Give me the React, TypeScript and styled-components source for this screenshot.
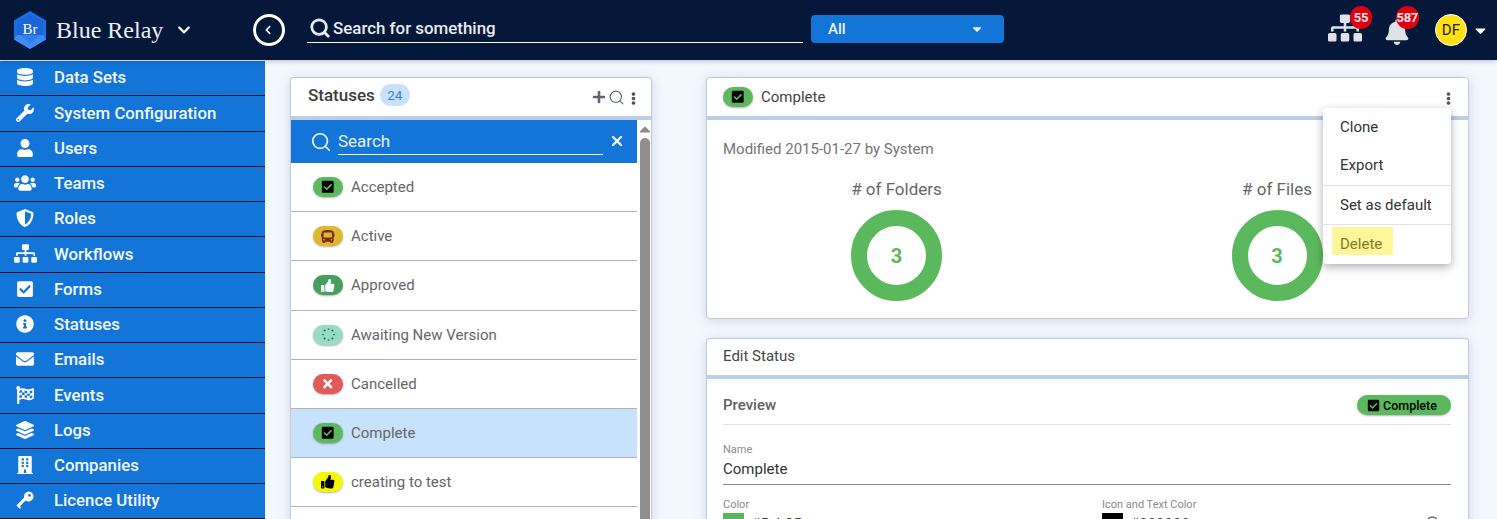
import React from "react";
import styled, { createGlobalStyle } from "styled-components";
import {
  FaDatabase, FaWrench, FaUser, FaUsers, FaShieldAlt, FaSitemap, FaCheckSquare, FaInfoCircle,
  FaEnvelope, FaFlagCheckered, FaLayerGroup, FaBuilding, FaBell, FaBus, FaThumbsUp,
  FaTimes, FaPlus, FaEllipsisV, FaChevronLeft, FaCaretDown, FaCaretUp, FaChevronDown,
} from "react-icons/fa";
import { Search, X } from "lucide-react";

const Global = createGlobalStyle`
  html, body { margin: 0; padding: 0; height: 519px; overflow: hidden; }
  body { font-family: Roboto, "Liberation Sans", sans-serif; background: #f3f7fe; }
  * { box-sizing: border-box; }
  svg { flex: none; }
`;

const Page = styled.div`
  width: 1497px; height: 519px; overflow: hidden; display: flex; flex-direction: column;
`;
const TopBar = styled.header`
  height: 60px; flex: none; background: #05183a; display: flex; align-items: center; color: #fff;
  position: relative; z-index: 2; box-shadow: 0 1px 5px rgba(5,24,58,.25);
`;
const Brand = styled.div`
  width: 253px; flex: none; display: flex; align-items: center; padding-left: 13px;
`;
const BrandName = styled.span`
  font-family: "Liberation Serif", serif; font-size: 24px; color: #eef0f3; margin-left: 9px; width: 121px;
`;
const BackButton = styled.button`
  width: 32px; height: 32px; border-radius: 50%; border: 3px solid #fff; background: none; color: #fff;
  display: flex; align-items: center; justify-content: center; padding: 0 2px 0 0; font-size: 10px; flex: none;
`;
const SearchField = styled.div`
  width: 496px; margin-left: 22px; height: 28px; border-bottom: 1px solid #fff;
  display: flex; align-items: center; gap: 2px; padding: 0 0 2px 2px; font-size: 16.9px; font-weight: 500; color: #e8ebf0;
  margin-bottom: 2px;
`;
const Scope = styled.div`
  width: 193px; height: 28px; margin-left: 8px; border-radius: 4px; background: #1375d8; color: #eef4fb; font-size: 15px;
  font-weight: 500; display: flex; align-items: center; justify-content: space-between; padding: 0 20px 0 17px; margin-bottom: 2px;
`;
const Tools = styled.div`
  margin-left: auto; display: flex; align-items: center; padding-right: 8px;
`;
const ToolIcon = styled.div<{ $ml: number; $w: number }>`
  position: relative; margin-left: ${(p) => p.$ml}px; width: ${(p) => p.$w}px; height: 30px; color: #dfe3e9;
  display: flex; align-items: flex-end; justify-content: center;
`;
const Badge = styled.span`
  position: absolute; top: -9px; right: -10px; min-width: 22px; height: 23px; padding: 0 1px; border-radius: 12px; background: #e0000f; color: #f0e6e6;
  font-size: 13px; font-weight: 700; display: flex; align-items: center; justify-content: center; letter-spacing: -.3px;
`;
const Avatar = styled.div`
  width: 32px; height: 32px; border-radius: 50%; background: #ffe014; border: 1px solid #fff; color: #222; margin-left: 26px;
  display: flex; align-items: center; justify-content: center; font-size: 15px; font-weight: 400; letter-spacing: .3px;
`;
const AvatarCaret = styled.span`
  margin-left: 5px; display: flex; color: #fff; font-size: 17px;
`;

const Body = styled.div`
  flex: 1; display: flex; min-height: 0; padding-top: 1px;
`;
const Sidebar = styled.nav`
  width: 265px; flex: none; background: #1375d8; display: flex; flex-direction: column;
`;
const NavItem = styled.div`
  height: 35.25px; flex: none; border-bottom: 1px solid #05152e; display: flex; align-items: center; color: #f4f8fd;
  font-size: 16.8px; font-weight: 500; padding-left: 16px; padding-bottom: 1.7px;
`;
const NavIcon = styled.span<{ $size: number }>`
  width: 18px; margin-right: 20px; flex: none; display: flex; justify-content: center; font-size: ${(p) => p.$size}px; color: #fff;
`;

const Content = styled.main`
  flex: 1; display: flex; align-items: flex-start; padding: 16px 28px 0 25px; gap: 54px; min-width: 0;
`;
const Card = styled.section`
  background: #fff; border: 1px solid #c6c9cf; border-radius: 4px; box-shadow: 0 2px 12px rgba(70,100,170,.22);
`;
const ListCard = styled(Card)`
  width: 362px; flex: none; height: 470px; overflow: hidden; display: flex; flex-direction: column; border-bottom: 0;
`;
const ListHead = styled.div`
  height: 38px; flex: none; border-bottom: 4px solid #b8cfe6; box-sizing: content-box; display: flex; align-items: center; padding: 0 11px 0 17px; color: #3a3a3a;
`;
const ListTitle = styled.span`
  font-size: 17px; font-weight: 500; color: #3d3d3d; margin-bottom: 4px;
`;
const Count = styled.span`
  margin: 0 0 4px 5px; width: 30px; height: 22px; border-radius: 11px; background: #c8e2fb; color: #3c7fd4; font-size: 13.5px;
  display: flex; align-items: center; justify-content: center;
`;
const HeadIcons = styled.div`
  margin-left: auto; display: flex; align-items: center; gap: 2px; color: #5c6670;
`;
const Kebab = styled(FaEllipsisV)`
  margin-top: 3px; color: #555;
`;
const ListBody = styled.div`
  flex: 1; display: flex; min-height: 0;
`;
const ListColumn = styled.div`
  width: 346px; flex: none; display: flex; flex-direction: column;
`;
const ListSearch = styled.div`
  height: 43px; flex: none; background: #1375d8; display: flex; align-items: center; padding: 0 12px 0 19px; color: #eef4fb;
`;
const ListSearchInput = styled.div`
  width: 265px; margin-left: 6px; height: 27px; border-bottom: 1px solid #fff; font-size: 17px; display: flex; align-items: center; color: #e9f1fb;
`;
const ListSearchClear = styled.span`
  margin-left: auto; display: flex; margin-bottom: 2px;
`;
const Row = styled.div<{ $active?: boolean }>`
  height: 49.2px; flex: none; display: flex; align-items: center; padding: 0 0 0 22px; border-bottom: 1px solid #b0b3b8; color: #666;
  font-size: 15px; background: ${(p) => (p.$active ? "#c8e2fb" : "#fff")};
`;
const Pill = styled.span<{ $bg: string; $fg: string }>`
  width: 30px; height: 20px; border-radius: 10px; background: ${(p) => p.$bg}; color: ${(p) => p.$fg}; display: flex; align-items: center; justify-content: center;
  box-shadow: 0 1px 2px rgba(0,0,0,.3); font-size: 13.5px; flex: none; margin-right: 8px;
`;
const ScrollTrack = styled.div`
  width: 16px; flex: none; padding: 0 3px; display: flex; flex-direction: column; align-items: center; color: #8e8e8e; background: #fff;
`;
const ScrollArrow = styled.span`
  height: 18px; flex: none; display: flex; align-items: center; justify-content: center; font-size: 18px;
`;
const ScrollThumb = styled.div`
  width: 10px; flex: 1; background: #8e8e8e; border-radius: 5px 5px 0 0;
`;

const RightColumn = styled.div`
  width: 763px; flex: none; display: flex; flex-direction: column; gap: 19px; position: relative;
`;
const StatsCard = styled(Card)`
  height: 242px; display: flex; flex-direction: column;
`;
const CardHead = styled.div`
  height: 38px; flex: none; box-sizing: content-box; border-bottom: 4px solid #b8cfe6; display: flex; align-items: center; padding: 0 13px 0 16px; font-size: 15px; color: #444;
`;
const EditHead = styled(CardHead)`
  height: 34px; padding-bottom: 2px;
`;
const Meta = styled.div`
  font-size: 15px; color: #757575; padding: 21px 16px 0; line-height: 17px;
`;
const Stats = styled.div`
  display: grid; grid-template-columns: 379px 382px; margin-top: 21px;
`;
const Stat = styled.div`
  display: flex; flex-direction: column; align-items: center; color: #666; font-size: 17px; line-height: 20px;
`;
const Donut = styled.div`
  width: 91px; height: 91px; margin-top: 11px; border-radius: 50%; border: 16px solid #5cb85c; color: #5cb85c; font-size: 20px; font-weight: 700;
  display: flex; align-items: center; justify-content: center;
`;
const Menu = styled.div`
  position: absolute; left: 617px; top: 31px; width: 128px; height: 156px; background: #fff; border-radius: 4px; box-shadow: 0 3px 10px rgba(0,0,0,.32); z-index: 3;
  display: flex; flex-direction: column; color: #333; font-size: 15px;
`;
const MenuItem = styled.div<{ $h: number; $line?: boolean }>`
  height: ${(p) => p.$h}px; display: flex; align-items: center; padding-left: 17px; flex: none;
  border-bottom: ${(p) => (p.$line ? "1px solid #e0e0e0" : "0")};
`;
const ExportItem = styled(MenuItem)`
  padding-bottom: 2px;
`;
const Highlight = styled.span`
  align-self: flex-start; margin: 2px 0 0 -8px; padding: 5px 11px 0 8px; height: 28px; display: flex; align-items: center; background: #fff59a; color: #817b27;
`;
const EditCard = styled(Card)`
  height: 200px; border-bottom: 0; overflow: hidden;
`;
const EditBody = styled.div`
  padding: 0 17px 0 16px;
`;
const PreviewRow = styled.div`
  height: 24px; box-sizing: content-box; display: flex; align-items: center; justify-content: space-between; border-bottom: 1px solid #e0e0e0; padding: 14px 0 7px;
  color: #616161; font-size: 15px; font-weight: 500;
`;
const PreviewBadge = styled.span`
  height: 20px; width: 94px; border-radius: 10px; background: #5cb85c; color: #000; display: flex; align-items: center; padding-left: 10px; gap: 3px; font-size: 12.5px; font-weight: 500; box-shadow: 0 1px 2px rgba(0,0,0,.3);
`;
const FieldLabel = styled.div`
  font-size: 11px; color: #8a8a8a; line-height: 12px;
`;
const NameField = styled.div`
  margin-top: 19px; height: 41px; border-bottom: 1px solid #888; display: flex; flex-direction: column;
`;
const FieldValue = styled.div`
  font-size: 15px; color: #333; margin-top: 5px; line-height: 17px;
`;
const ColorGrid = styled.div`
  display: grid; grid-template-columns: 379px 1fr; margin-top: 14px;
`;
const ColorValue = styled.div`
  display: flex; align-items: flex-start; gap: 7px; font-size: 15px; color: #444; margin-top: 2px; height: 14px;
`;
const ColorText = styled.span`
  padding-top: 3px; line-height: 17px;
`;
const Swatch = styled.span<{ $c: string }>`
  width: 21px; height: 14px; background: ${(p) => p.$c}; flex: none;
`;
const ColorEnd = styled.span`
  margin-left: auto; color: #6a6a6a; display: flex; margin-right: 10px; padding-top: 2px;
`;

const Logo = () => (
  <svg width="34" height="38" viewBox="0 0 34 38">
    <polygon points="17,0 33,9.5 33,28.5 17,38 1,28.5 1,9.5" fill="#1c70e6" />
    <polygon points="17,3 30,10.5 30,24 4,24 4,10.5" fill="#1a66d8" />
    <polygon points="4,24 30,24 33,28.5 17,38 1,28.5" fill="#3e8cf5" />
    <polygon points="7,24 27,24 17,33" fill="#2f7eee" />
    <text x="17" y="23" textAnchor="middle" fontFamily="Liberation Serif, serif" fontSize="15" fill="#fff">Br</text>
  </svg>
);

const Dots = () => (
  <svg width="15" height="15" viewBox="0 0 15 15" fill="#17635c">
    {[0, 45, 90, 135, 180, 225, 270, 315].map((a) => (
      <circle key={a} cx={7.5 + 5.5 * Math.cos((a * Math.PI) / 180)} cy={7.5 + 5.5 * Math.sin((a * Math.PI) / 180)} r={a % 90 ? 1 : 0.85} />
    ))}
  </svg>
);

const SkeletonKey = () => (
  <svg width="1em" height="1em" viewBox="0 0 18 18" fill="#fff">
    <path fillRule="evenodd" d="M12.5 0.5a5 5 0 1 1-2.9 9.1L3.9 15.2l1.4 1.4-1.6 1.1-1.3-1.3-1.2-1.2-.7-.8L8.2 6.6A5 5 0 0 1 12.5.5zm1 2.4a1.4 1.4 0 1 0 0 2.8 1.4 1.4 0 0 0 0-2.8z" />
  </svg>
);

const nav: [string, React.ComponentType, number][] = [
  ["Data Sets", FaDatabase, 18], ["System Configuration", FaWrench, 18], ["Users", FaUser, 18], ["Teams", FaUsers, 22],
  ["Roles", FaShieldAlt, 18], ["Workflows", FaSitemap, 23], ["Forms", FaCheckSquare, 18], ["Statuses", FaInfoCircle, 18],
  ["Emails", FaEnvelope, 18], ["Events", FaFlagCheckered, 18], ["Logs", FaLayerGroup, 18], ["Companies", FaBuilding, 18], ["Licence Utility", SkeletonKey, 18],
];

const rows: { name: string; bg: string; fg: string; icon: React.ReactNode; active?: boolean }[] = [
  { name: "Accepted", bg: "#5cb85c", fg: "#000", icon: <FaCheckSquare /> },
  { name: "Active", bg: "#dcb92e", fg: "#7a2b12", icon: <FaBus /> },
  { name: "Approved", bg: "#479f5f", fg: "#fff", icon: <FaThumbsUp /> },
  { name: "Awaiting New Version", bg: "#98dcc4", fg: "#17635c", icon: <Dots /> },
  { name: "Cancelled", bg: "#e05a5a", fg: "#fff", icon: <FaTimes /> },
  { name: "Complete", bg: "#5cb85c", fg: "#000", icon: <FaCheckSquare />, active: true },
  { name: "creating to test", bg: "#f4f900", fg: "#000", icon: <FaThumbsUp /> },
];

export default function App() {
  return (
    <Page>
      <Global />
      <TopBar>
        <Brand>
          <Logo />
          <BrandName>Blue Relay</BrandName>
          <FaChevronDown size={14} color="#fff" />
        </Brand>
        <BackButton><FaChevronLeft /></BackButton>
        <SearchField><Search size={22} strokeWidth={3} />Search for something</SearchField>
        <Scope>All<FaCaretDown size={14} /></Scope>
        <Tools>
          <ToolIcon $ml={0} $w={34}><FaSitemap size={34} /><Badge>55</Badge></ToolIcon>
          <ToolIcon $ml={23} $w={24}><FaBell size={26} /><Badge>587</Badge></ToolIcon>
          <Avatar>DF</Avatar>
          <AvatarCaret><FaCaretDown /></AvatarCaret>
        </Tools>
      </TopBar>
      <Body>
        <Sidebar>
          {nav.map(([label, Icon, size]) => (
            <NavItem key={label}><NavIcon $size={size}><Icon /></NavIcon>{label}</NavItem>
          ))}
        </Sidebar>
        <Content>
          <ListCard>
            <ListHead>
              <ListTitle>Statuses</ListTitle>
              <Count>24</Count>
              <HeadIcons>
                <FaPlus size={14} />
                <Search size={17} strokeWidth={1.6} />
                <Kebab size={13} />
              </HeadIcons>
            </ListHead>
            <ListBody>
              <ListColumn>
                <ListSearch>
                  <Search size={22} strokeWidth={1.8} />
                  <ListSearchInput>Search</ListSearchInput>
                  <ListSearchClear><X size={16} strokeWidth={3.5} /></ListSearchClear>
                </ListSearch>
                {rows.map((r) => (
                  <Row key={r.name} $active={r.active}>
                    <Pill $bg={r.bg} $fg={r.fg}>{r.icon}</Pill>{r.name}
                  </Row>
                ))}
              </ListColumn>
              <ScrollTrack>
                <ScrollArrow><FaCaretUp /></ScrollArrow>
                <ScrollThumb />
              </ScrollTrack>
            </ListBody>
          </ListCard>
          <RightColumn>
            <StatsCard>
              <CardHead>
                <Pill $bg="#5cb85c" $fg="#000"><FaCheckSquare /></Pill>Complete
                <HeadIcons><Kebab size={13} /></HeadIcons>
              </CardHead>
              <Meta>Modified 2015-01-27 by System</Meta>
              <Stats>
                <Stat># of Folders<Donut>3</Donut></Stat>
                <Stat># of Files<Donut>3</Donut></Stat>
              </Stats>
            </StatsCard>
            <Menu>
              <MenuItem $h={38}>Clone</MenuItem>
              <ExportItem $h={40} $line>Export</ExportItem>
              <MenuItem $h={39} $line>Set as default</MenuItem>
              <MenuItem $h={39}><Highlight>Delete</Highlight></MenuItem>
            </Menu>
            <EditCard>
              <EditHead>Edit Status</EditHead>
              <EditBody>
                <PreviewRow>
                  Preview
                  <PreviewBadge><FaCheckSquare size={13} />Complete</PreviewBadge>
                </PreviewRow>
                <NameField>
                  <FieldLabel>Name</FieldLabel>
                  <FieldValue>Complete</FieldValue>
                </NameField>
                <ColorGrid>
                  <div>
                    <FieldLabel>Color</FieldLabel>
                    <ColorValue><Swatch $c="#5cb85c" /><ColorText>#5cb85c</ColorText></ColorValue>
                  </div>
                  <div>
                    <FieldLabel>Icon and Text Color</FieldLabel>
                    <ColorValue><Swatch $c="#000" /><ColorText>#000000</ColorText><ColorEnd><Search size={16} /></ColorEnd></ColorValue>
                  </div>
                </ColorGrid>
              </EditBody>
            </EditCard>
          </RightColumn>
        </Content>
      </Body>
    </Page>
  );
}
